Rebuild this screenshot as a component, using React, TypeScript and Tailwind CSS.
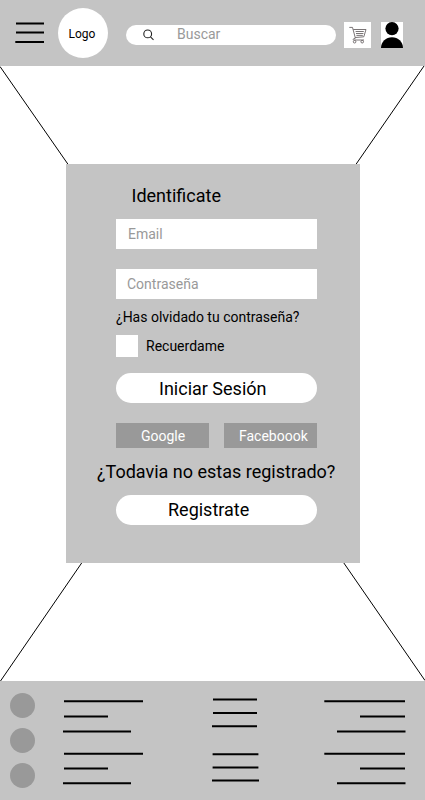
import React from "react";

type Line = [number, number, number];

const leftLines: Line[] = [
  [64, 143, 20.2],
  [64, 108, 35.5],
  [63, 131, 50.6],
  [64, 143, 72.7],
  [64, 108, 87.5],
  [63, 131, 102.2],
];
const middleLines: Line[] = [
  [213, 257, 18.6],
  [213, 257, 32],
  [212, 257, 45.3],
  [212.6, 258.4, 73.3],
  [212.6, 258.4, 86.5],
  [212, 259, 99.6],
];
const rightLines: Line[] = [
  [324.3, 405, 20.2],
  [360, 405, 35.5],
  [337, 405.5, 50.6],
  [324.3, 405, 72.7],
  [360, 405, 87.5],
  [337, 405.5, 102.2],
];

function Lines({ lines, start, width }: { lines: Line[]; start: number; width: number }) {
  return (
    <svg width={width} height={119} viewBox={`${start} 0 ${width} 119`} className="shrink-0" stroke="#000" strokeWidth="2">
      {lines.map(([a, b, y]) => (
        <line key={y} x1={a} x2={b} y1={y} y2={y} />
      ))}
    </svg>
  );
}

function Header() {
  return (
    <header className="flex h-[66px] shrink-0 items-start bg-[#c4c4c4]">
      <svg width="29" height="26" viewBox="15 20 29 26" className="mt-5 ml-[15px] shrink-0" stroke="#000" strokeWidth="2">
        <path d="M16 23.5H44M16 32.6H44M15.3 42H44" />
      </svg>
      <div className="mt-2 ml-3.5 flex size-[50px] shrink-0 items-center justify-center rounded-full bg-white pt-px pr-[2px] text-xs">
        Logo
      </div>
      <div className="mt-[25px] ml-[18px] flex h-5 w-[210px] shrink-0 items-center rounded-full bg-white pl-[17px]">
        <svg width="12" height="13" viewBox="0 0 12 13" fill="none" stroke="#222" strokeWidth="1.1" className="shrink-0">
          <circle cx="4.7" cy="4.9" r="3.9" />
          <path d="M7.5 7.8L10.5 10.8" />
        </svg>
        <span className="mb-0.5 ml-[22px] text-sm leading-5 text-[#999]">Buscar</span>
      </div>
      <div className="mt-[22px] ml-2 h-[26px] w-[27px] shrink-0 bg-white">
        <svg width="27" height="26" viewBox="0 0 27 26" fill="none" stroke="#6b6566" strokeWidth="0.9">
          <path d="M5.3 5.4H8.5L11.4 16.2Q9.2 16.4 9.2 17.4Q9.2 18 10.3 18H20" />
          <path d="M9.3 7.5H22L19.8 14.8L11.3 15.5" />
          <path d="M11.6 9.5H19.8M12 11.5H19.4M12.4 13.4H18.8" />
          <circle cx="10.6" cy="19.7" r="1.3" />
          <circle cx="18.2" cy="19.7" r="1.3" />
        </svg>
      </div>
      <div className="mt-[22px] ml-2.5 h-[26px] w-[22px] shrink-0 bg-white">
        <svg width="22" height="26" viewBox="0 0 22 26" fill="#000">
          <circle cx="11" cy="6.6" r="6.6" />
          <path d="M0 26A11 10.8 0 0 1 22 26Z" />
        </svg>
      </div>
    </header>
  );
}

function LoginCard() {
  return (
    <section className="relative ml-[66px] flex h-[399px] w-[294px] flex-col bg-[#c4c4c4] px-[50px]">
      <h1 className="mt-[21px] ml-[15.5px] text-lg leading-[21px]">Identificate</h1>
      <div className="mt-[13px] flex h-[30px] w-[201px] shrink-0 items-center bg-white pl-3 text-sm text-[#999]">Email</div>
      <div className="mt-5 flex h-[30px] w-[201px] shrink-0 items-center bg-white pl-[11px] text-sm text-[#999]">Contraseña</div>
      <p className="mt-2.5 text-sm leading-4 whitespace-nowrap">¿Has olvidado tu contraseña?</p>
      <div className="mt-2.5 flex h-[22px] items-center gap-2">
        <span className="size-[22px] bg-white" />
        <span className="text-sm leading-4">Recuerdame</span>
      </div>
      <button className="mt-4 h-[30px] w-[201px] shrink-0 rounded-full bg-white pl-[43px] text-left text-lg leading-8">Iniciar Sesión</button>
      <div className="mt-5 flex h-[25px] w-[201px] shrink-0 justify-between text-sm leading-[27px] text-white">
        <button className="h-[25px] w-[93px] bg-[#999] pt-px pl-[25px] text-left leading-6">Google</button>
        <button className="h-[25px] w-[93px] bg-[#999] pt-px pl-[15px] text-left leading-6">Faceboook</button>
      </div>
      <p className="mt-[13px] -ml-[19px] text-lg leading-[21px] whitespace-nowrap">¿Todavia no estas registrado?</p>
      <button className="mt-[13px] h-[30px] w-[201px] shrink-0 rounded-full bg-white pl-[52px] text-left text-lg leading-[30px]">Registrate</button>
    </section>
  );
}

export default function App() {
  return (
    <div className="flex h-[800px] w-[425px] flex-col overflow-hidden bg-white font-[Roboto,sans-serif] text-black">
      <Header />
      <main className="relative h-[615px] shrink-0 pt-[98px]">
        <svg width="425" height="615" className="absolute inset-0" stroke="#000" strokeWidth="1">
          <path d="M0 0.5L68.5 99M424 0L355.5 99M82 496.5L0.5 615M343.5 496.5L425 614.5" />
        </svg>
        <LoginCard />
      </main>
      <footer className="flex h-[119px] shrink-0 bg-[#c4c4c4]">
        <div className="ml-2.5 flex w-[25px] shrink-0 flex-col gap-2.5 pt-3">
          <span className="size-[25px] rounded-full bg-[#999]" />
          <span className="size-[25px] rounded-full bg-[#999]" />
          <span className="size-[25px] rounded-full bg-[#999]" />
        </div>
        <div className="ml-[27px] flex gap-[60px]">
          <Lines lines={leftLines} start={62} width={83} />
          <Lines lines={middleLines} start={205} width={57} />
          <Lines lines={rightLines} start={322} width={86} />
        </div>
      </footer>
    </div>
  );
}
